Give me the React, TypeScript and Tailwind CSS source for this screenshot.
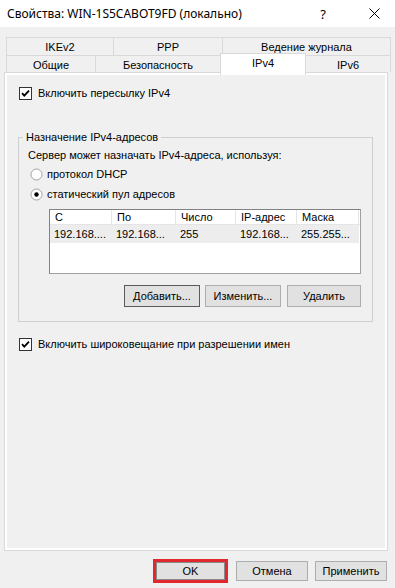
import type { ReactNode } from "react";

function CheckBox({ label }: { label: string }) {
  return (
    <div className="flex h-[16px] items-center">
      <span className="flex h-[13px] w-[13px] items-center justify-center border border-[#333333] bg-white">
        <svg width="11" height="11" viewBox="0 0 11 11">
          <path d="M2 5.2 L4.3 7.6 L9 2.6" fill="none" stroke="#000" strokeWidth="1.8" />
        </svg>
      </span>
      <span className="ml-[6px]">{label}</span>
    </div>
  );
}

function Radio({ label, checked }: { label: string; checked?: boolean }) {
  return (
    <div className="flex h-[16px] items-center">
      <svg width="13" height="13" viewBox="0 0 13 13">
        <circle cx="6.5" cy="6.5" r="5.5" fill="#fff" stroke="#a2a2a2" />
        {checked && <circle cx="6.5" cy="6.5" r="2.2" fill="#000" />}
      </svg>
      <span className="ml-[4px]">{label}</span>
    </div>
  );
}

function Btn({ children, w, def }: { children: ReactNode; w: string; def?: boolean }) {
  return (
    <div
      className={`flex h-[22px] items-center justify-center border bg-[#e1e1e1] ${w} ${
        def ? "border-[#5a5a5a]" : "border-[#adadad]"
      }`}
    >
      {children}
    </div>
  );
}

const cols = [
  { h: "С", v: "192.168....", w: "w-[62px]" },
  { h: "По", v: "192.168...", w: "w-[64px]" },
  { h: "Число", v: "255", w: "w-[60px]" },
  { h: "IP-адрес", v: "192.168...", w: "w-[61px]" },
  { h: "Маска", v: "255.255...", w: "w-[62px]" },
];

export default function App() {
  return (
    <div className="h-[588px] w-[395px] overflow-hidden bg-[#f0f0f0] font-['Liberation_Sans',Arial,sans-serif] text-[11px] leading-[16px] text-black">
      {/* title */}
      <div className="flex h-[27px] items-center bg-white pl-[7px] font-['Noto_Sans',sans-serif] text-[12px]">
        <span>Свойства: WIN-1S5CABOT9FD (локально)</span>
        <span className="ml-auto mr-[43px] text-[13px]">?</span>
        <svg className="mr-[15px]" width="11" height="11" viewBox="0 0 11 11">
          <path d="M0.5 0.5 L10.5 10.5 M10.5 0.5 L0.5 10.5" stroke="#000" strokeWidth="1" />
        </svg>
      </div>

      {/* tabs */}
      <div className="ml-[6px] mt-[10px] flex h-[18px] w-[385px]">
        <div className="flex w-[107px] items-center justify-center border-l border-t border-[#d9d9d9]">IKEv2</div>
        <div className="flex w-[109px] items-center justify-center border-l border-t border-[#d9d9d9]">PPP</div>
        <div className="flex w-[169px] items-center justify-center border-x border-t border-[#d9d9d9]">
          Ведение журнала
        </div>
      </div>
      <div className="ml-[6px] flex h-[17px] w-[385px]">
        <div className="flex w-[89px] items-center justify-center border-l border-t border-[#d9d9d9] pt-[1px]">Общие</div>
        <div className="flex w-[125px] items-center justify-center border-l border-t border-[#d9d9d9] pt-[1px]">
          Безопасность
        </div>
        <div className="relative z-10 -mt-[2px] flex h-[22px] w-[86px] shrink-0 justify-center border-x border-t border-[#d9d9d9] bg-white pt-[1px]">
          IPv4
        </div>
        <div className="flex w-[85px] items-center justify-center border-r border-t border-[#d9d9d9] pt-[1px]">IPv6</div>
      </div>

      {/* panel */}
      <div className="ml-[4px] h-[479px] w-[384px] border border-[#d9d9d9]">
        <div className="h-full border-2 border-white pl-[12px]">
          <div className="mt-[10px]">
            <CheckBox label="Включить пересылку IPv4" />
          </div>

          <fieldset className="-ml-[1px] mt-[28px] w-[355px] border border-[#cfcfcf] pb-[14px]">
            <legend className="ml-[4px] px-[3px]">Назначение IPv4-адресов</legend>
            <div className="mt-[2px] pl-[9px]">Сервер может назначать IPv4-адреса, используя:</div>
            <div className="mt-[3px] pl-[11px]">
              <Radio label="протокол DHCP" />
            </div>
            <div className="mt-[4px] pl-[11px]">
              <Radio label="статический пул адресов" checked />
            </div>

            <div className="ml-[30px] mt-[7px] h-[65px] w-[312px] border border-[#a0a0a0] border-l-[#828282] border-t-[#828282] bg-white">
              <div className="flex h-[15px] border-b border-[#e5e5e5]">
                {cols.map((c) => (
                  <div key={c.h} className={`${c.w} flex items-center border-r border-[#e5e5e5] pl-[5px]`}>
                    {c.h}
                  </div>
                ))}
              </div>
              <div className="flex h-[18px] w-[309px] items-center bg-[#ededed]">
                {cols.map((c) => (
                  <div key={c.h} className={`${c.w} pl-[4px]`}>
                    {c.v}
                  </div>
                ))}
              </div>
            </div>

            <div className="mr-[11px] mt-[11px] flex justify-end">
              <Btn w="w-[76px]" def>
                Добавить...
              </Btn>
              <div className="ml-[5px]">
                <Btn w="w-[76px]">Изменить...</Btn>
              </div>
              <div className="ml-[6px]">
                <Btn w="w-[74px]">Удалить</Btn>
              </div>
            </div>
          </fieldset>

          <div className="mt-[14px]">
            <CheckBox label="Включить широковещание при разрешении имен" />
          </div>
        </div>
      </div>

      {/* bottom buttons */}
      <div className="mt-[8px] flex">
        <div className="ml-[153px] flex h-[24px] w-[75px] items-center justify-center border-[3px] border-[#e0282e]">
          <div className="flex h-[18px] w-[69px] items-center justify-center border border-[#8a8a8a] bg-[#e1e1e1]">
            OK
          </div>
        </div>
        <div className="ml-[8px] mt-[2px] flex h-[20px] w-[72px] items-center justify-center border border-[#adadad] bg-[#e1e1e1]">
          Отмена
        </div>
        <div className="ml-[7px] mt-[2px] flex h-[20px] w-[72px] items-center justify-center border border-[#adadad] bg-[#e1e1e1]">
          Применить
        </div>
      </div>
    </div>
  );
}
